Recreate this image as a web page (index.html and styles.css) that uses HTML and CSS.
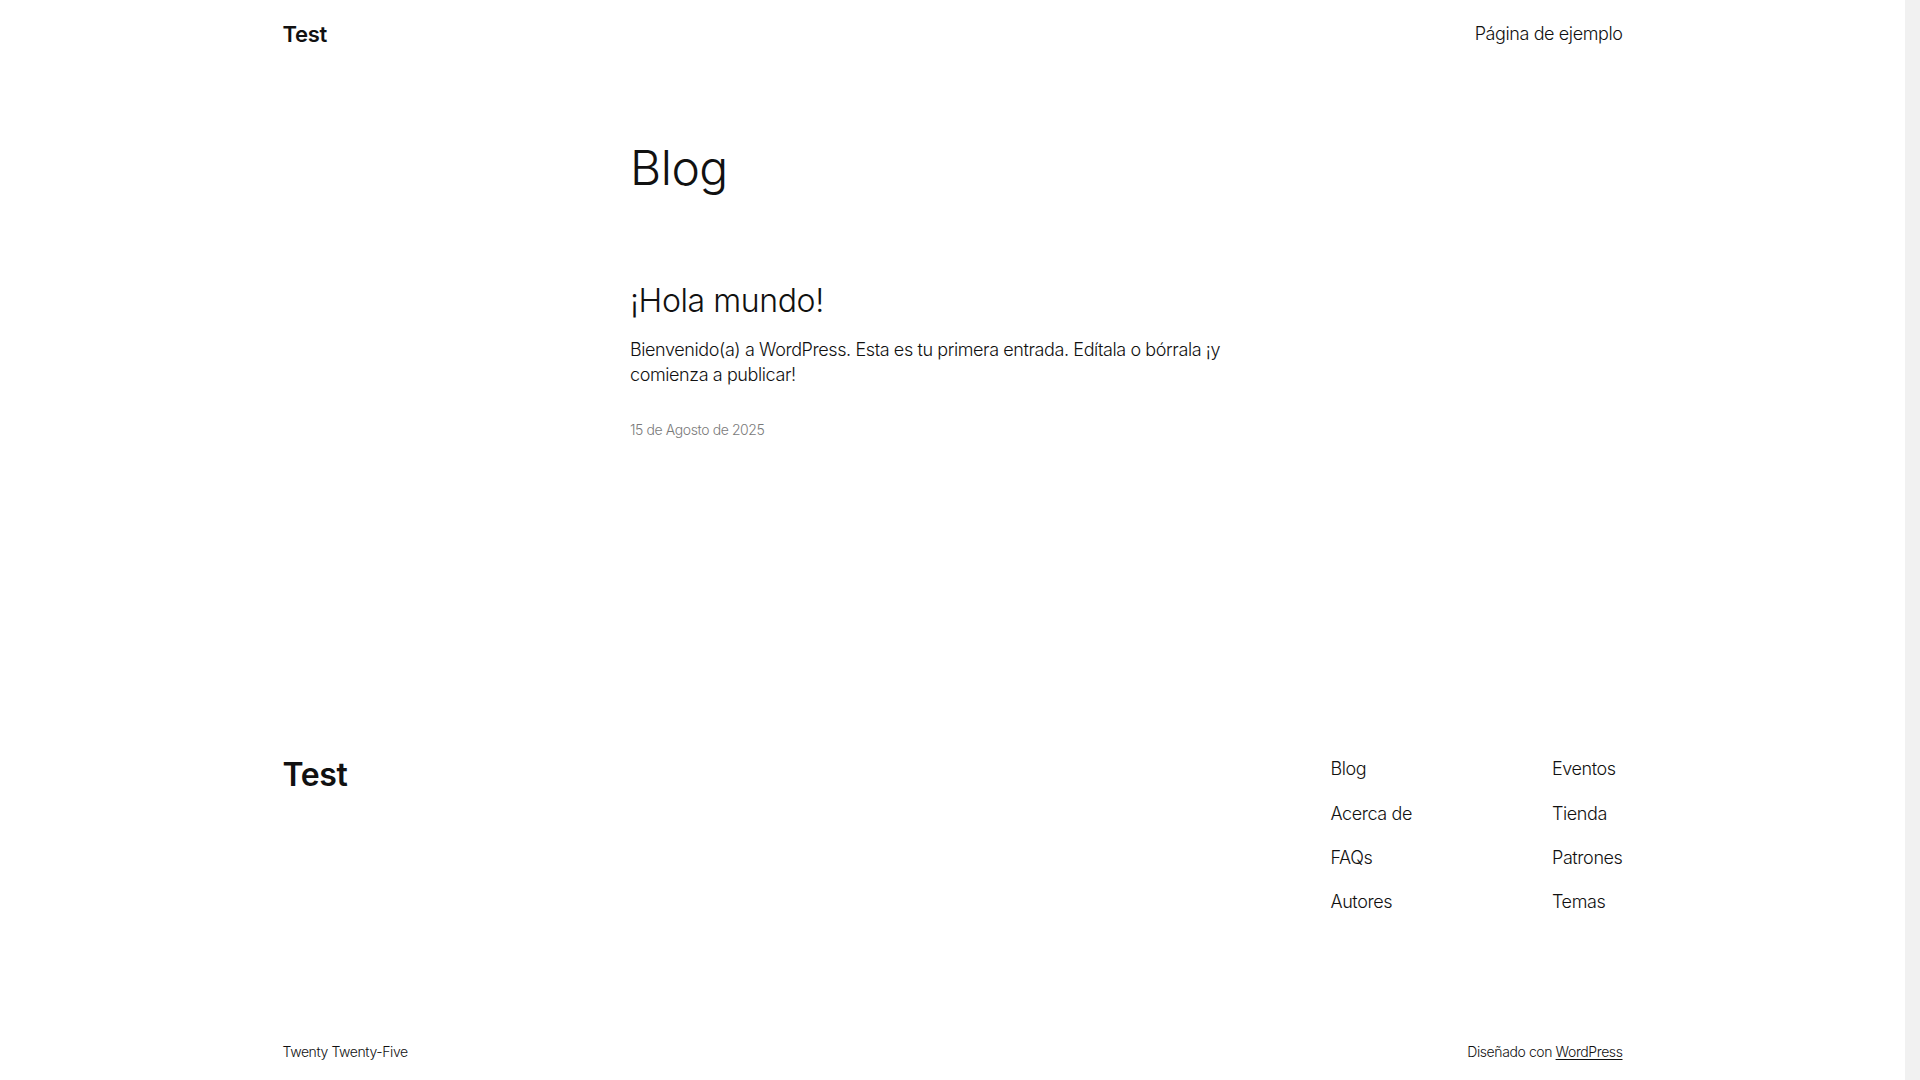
FILE: index.html
```html
<!DOCTYPE html>
<html lang="es">

<head>
    <meta charset="UTF-8" />
    <title>Blog – Test</title>
    <link rel="stylesheet" href="styles.css">
</head>

<body>

    <header class="site-header">
        <a class="site-title" href="#">Test</a>
        <nav class="header-nav">
            <a href="#">Página de ejemplo</a>
        </nav>
    </header>

    <main class="site-main">
        <h1 class="page-title">Blog</h1>

        <article class="post">
            <h2 class="post-title"><a href="#">¡Hola mundo!</a></h2>
            <p class="post-excerpt">Bienvenido(a) a WordPress. Esta es tu primera entrada. Edítala o bórrala ¡y comienza a publicar!</p>
            <div class="post-date">15 de Agosto de 2025</div>
        </article>
    </main>

    <footer class="site-footer">
        <div class="footer-top">
            <a class="footer-title" href="#">Test</a>
            <div class="footer-menus">
                <nav class="footer-nav">
                    <a href="#">Blog</a>
                    <a href="#">Acerca de</a>
                    <a href="#">FAQs</a>
                    <a href="#">Autores</a>
                </nav>
                <nav class="footer-nav">
                    <a href="#">Eventos</a>
                    <a href="#">Tienda</a>
                    <a href="#">Patrones</a>
                    <a href="#">Temas</a>
                </nav>
            </div>
        </div>

        <div class="footer-bottom">
            <span>Twenty Twenty-Five</span>
            <span>Diseñado con <a class="credit" href="#">WordPress</a></span>
        </div>
    </footer>

    <div class="scroll-track"></div>

</body>

</html>
```

FILE: styles.css
```css
body {
    font-family: Inter, "Noto Sans", sans-serif;
    font-weight: 300;
    font-size: 18px;
    line-height: 1.4;
    letter-spacing: -0.4px;
    background: #fff;
    color: #111;
    margin: 0;
    padding: 0 15px 0 0;
}

a {
    color: inherit;
    text-decoration: none;
}

/* fake browser scrollbar on the right edge */
.scroll-track {
    position: fixed;
    top: 0;
    right: 0;
    width: 15px;
    height: 100%;
    background: #f1f1f1;
}

/* header */

.site-header {
    max-width: 1340px;
    height: 68px;
    margin: 0 auto;
    display: flex;
    justify-content: space-between;
    align-items: center;
}

.site-title {
    font-size: 22px;
    font-weight: 600;
    letter-spacing: -0.3px;
}

.header-nav a {
    font-size: 18px;
}

/* main */

.site-main {
    width: 645px;
    margin: 0 auto;
    padding-top: 73px;
}

.page-title {
    margin: 0;
    font-size: 48px;
    font-weight: 300;
    line-height: 54px;
    letter-spacing: -0.5px;
}

.post {
    padding-top: 88px;
}

.post-title {
    margin: 0;
    font-size: 32px;
    font-weight: 300;
    line-height: 36px;
    letter-spacing: -0.4px;
}

.post-excerpt {
    margin: 18px 0 0;
}

.post-date {
    margin-top: 32px;
    font-size: 14px;
    line-height: 21px;
    color: #7a7a7a;
}

/* footer */

.site-footer {
    max-width: 1340px;
    margin: 0 auto;
    padding: 316px 0 38px;
}

.footer-top {
    display: flex;
    justify-content: space-between;
    align-items: flex-start;
}

.footer-title {
    font-size: 32px;
    font-weight: 600;
    line-height: 38px;
    letter-spacing: -0.4px;
}

.footer-menus {
    display: flex;
    gap: 140px;
}

.footer-nav {
    display: flex;
    flex-direction: column;
    gap: 19px;
}

.footer-bottom {
    margin-top: 128px;
    display: flex;
    justify-content: space-between;
    font-size: 14px;
    line-height: 20px;
}

.credit {
    text-decoration: underline;
    text-underline-offset: 2px;
}
```
